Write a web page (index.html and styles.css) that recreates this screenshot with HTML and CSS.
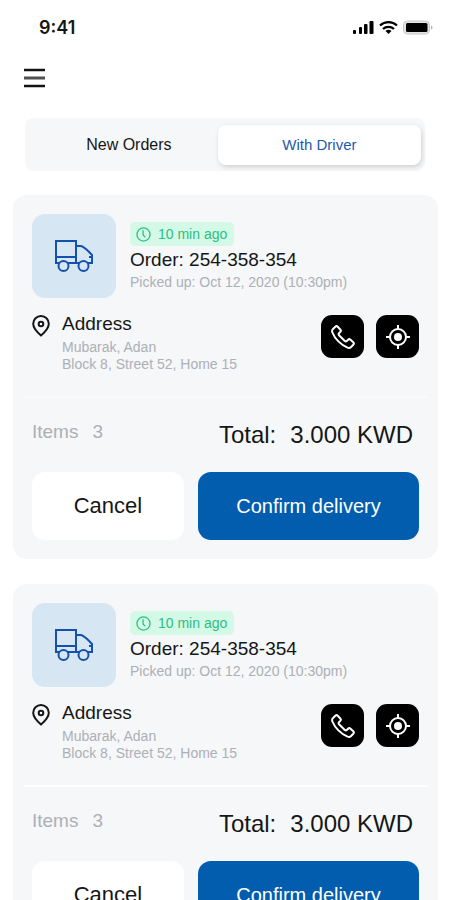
FILE: index.html
```html
<!DOCTYPE html>
<html lang="en">
<head>
<meta charset="utf-8">
<meta name="viewport" content="width=device-width, initial-scale=1">
<title>Orders</title>
<link rel="stylesheet" href="styles.css">
</head>
<body>
<svg class="sprite" aria-hidden="true">
  <symbol id="truck" viewBox="0 0 40 34">
    <g fill="none" stroke="currentColor" stroke-width="2">
      <path d="M5 24H2V2h20v22h-8M22 7h5c4 1 7 5 11 9v8h-4M2 18h20M22 24h3M38 18h-3"/>
      <circle cx="9.500" cy="27" r="5"/>
      <circle cx="29.500" cy="27" r="5"/>
    </g>
  </symbol>
  <symbol id="clock" viewBox="0 0 16 16">
    <g fill="none" stroke="currentColor" stroke-width="1.400" stroke-linecap="round">
      <circle cx="8" cy="8" r="7"/>
      <path d="M7.500 4v4.500l2 2"/>
    </g>
  </symbol>
  <symbol id="pin" viewBox="0 0 18 22">
    <g fill="none" stroke="currentColor" stroke-width="2">
      <path d="M9 20.500C5.500 17.500 1.200 13.500 1.200 8.800a7.800 7.800 0 0 1 15.600 0C16.800 13.500 12.500 17.500 9 20.500z"/>
      <circle cx="9" cy="9" r="2.300"/>
    </g>
  </symbol>
  <symbol id="phone" viewBox="0 0 24 24">
    <path fill="none" stroke="currentColor" stroke-width="2" stroke-linejoin="round" d="M1.800 4.200L4.300 1.700c.8-.7 1.700-.7 2.400 0l2.600 2.800c.7.800.7 1.700 0 2.400L8 8.200c-.6.700-.5 1.300 0 2l5.800 5.800c.7.500 1.300.6 2 0l1.300-1.300c.7-.7 1.600-.7 2.400 0l2.800 2.600c.7.700.7 1.600 0 2.400l-2.500 2.500c-.9.800-2 .9-3.300.4-3.500-1.400-6.400-3.500-9.100-6.200C4.900 13.900 2.800 11 1.400 7.500.9 6.200 1 5.100 1.800 4.200z"/>
  </symbol>
  <symbol id="locate" viewBox="0 0 24 24">
    <g fill="none" stroke="currentColor" stroke-width="2">
      <circle cx="12" cy="12" r="8"/>
      <path d="M12 0v4M12 20v4M0 12h4M20 12h4"/>
    </g>
    <circle cx="12" cy="12" r="4" fill="currentColor"/>
  </symbol>
</svg>

<header>
  <div class="status">
    <time>9:41</time>
    <svg class="status-icons" viewBox="0 0 82 16" aria-hidden="true">
      <g>
        <rect x="1" y="10" width="3" height="4" rx="1"/>
        <rect x="7" y="7" width="3" height="7" rx="1"/>
        <rect x="12" y="4" width="3.500" height="10" rx="1"/>
        <rect x="17.500" y="1" width="4" height="13" rx="1"/>
      </g>
      <g fill="none" stroke="#000" stroke-width="2.200">
        <path d="M28 5.500a12.500 12.500 0 0 1 17 0"/>
        <path d="M31 9a8 8 0 0 1 11 0"/>
      </g>
      <path d="M33.500 11a4.500 4.500 0 0 1 6 0l-3 3z"/>
      <rect x="51.500" y="1" width="26" height="13" rx="4" fill="#e4e4e4" stroke="#c8c8c8"/>
      <rect x="54" y="3" width="21.500" height="9" rx="1.500"/>
      <path d="M79 5.500c2 .6 2 3.600 0 4.200z" fill="#b5b5b5"/>
    </svg>
  </div>
  <button class="menu" type="button" aria-label="Menu">
    <svg viewBox="0 0 21 20" aria-hidden="true">
      <path d="M0 2h21M0 18h21" stroke="#141414" stroke-width="2.400"/>
      <path d="M0 10h21" stroke="#505050" stroke-width="3"/>
    </svg>
  </button>
</header>

<nav class="tabs">
  <button class="tab" type="button">New Orders</button>
  <button class="tab active" type="button" aria-current="true">With Driver</button>
</nav>

<main class="orders">
  <article class="card">
    <div class="summary">
      <div class="tile"><svg aria-hidden="true"><use href="#truck"/></svg></div>
      <div class="info">
        <span class="badge"><svg aria-hidden="true"><use href="#clock"/></svg>10 min ago</span>
        <h2>Order: 254-358-354</h2>
        <p>Picked up: Oct 12, 2020 (10:30pm)</p>
      </div>
    </div>
    <div class="address">
      <svg class="pin" aria-hidden="true"><use href="#pin"/></svg>
      <div class="place">
        <h3>Address</h3>
        <p>Mubarak, Adan<br>Block 8, Street 52, Home 15</p>
      </div>
      <button class="action" type="button" aria-label="Call"><svg aria-hidden="true"><use href="#phone"/></svg></button>
      <button class="action" type="button" aria-label="Locate"><svg aria-hidden="true"><use href="#locate"/></svg></button>
    </div>
    <hr class="soft">
    <div class="totals">
      <div class="items"><span>Items</span><span>3</span></div>
      <div class="total"><span>Total:</span><span>3.000 KWD</span></div>
    </div>
    <div class="buttons">
      <button class="cancel" type="button">Cancel</button>
      <button class="confirm" type="button">Confirm delivery</button>
    </div>
  </article>

  <article class="card">
    <div class="summary">
      <div class="tile"><svg aria-hidden="true"><use href="#truck"/></svg></div>
      <div class="info">
        <span class="badge"><svg aria-hidden="true"><use href="#clock"/></svg>10 min ago</span>
        <h2>Order: 254-358-354</h2>
        <p>Picked up: Oct 12, 2020 (10:30pm)</p>
      </div>
    </div>
    <div class="address">
      <svg class="pin" aria-hidden="true"><use href="#pin"/></svg>
      <div class="place">
        <h3>Address</h3>
        <p>Mubarak, Adan<br>Block 8, Street 52, Home 15</p>
      </div>
      <button class="action" type="button" aria-label="Call"><svg aria-hidden="true"><use href="#phone"/></svg></button>
      <button class="action" type="button" aria-label="Locate"><svg aria-hidden="true"><use href="#locate"/></svg></button>
    </div>
    <hr>
    <div class="totals">
      <div class="items"><span>Items</span><span>3</span></div>
      <div class="total"><span>Total:</span><span>3.000 KWD</span></div>
    </div>
    <div class="buttons">
      <button class="cancel" type="button">Cancel</button>
      <button class="confirm" type="button">Confirm delivery</button>
    </div>
  </article>
</main>
</body>
</html>
```

FILE: styles.css
```css
* {
  box-sizing: border-box;
}

body {
  margin: 0;
  background: #fff;
  color: #161616;
  font-family: "Liberation Sans", Arial, sans-serif;
}

html {
  scrollbar-width: none;
}

h2, h3, p {
  margin: 0;
  font-weight: 400;
}

button {
  margin: 0;
  padding: 0;
  border: 0;
  background: none;
  color: inherit;
  font-family: inherit;
  cursor: pointer;
}

svg {
  display: block;
}

.sprite {
  position: absolute;
  width: 0;
  height: 0;
}

.status {
  display: flex;
  justify-content: space-between;
  align-items: center;
  padding: 16px 16px 0 39px;
}

.status time {
  font: 600 18px/24px Inter, sans-serif;
}

.status-icons {
  width: 82px;
  height: 16px;
}

.menu {
  display: block;
  margin: 28px 24px 0;
}

.menu svg {
  width: 21px;
  height: 20px;
}

.tabs {
  display: grid;
  grid-template-columns: 7fr 8fr;
  margin: 30px 25px 0;
  padding: 7px 4px 6px 15px;
  border-radius: 8px;
  background: #f5f7f8;
}

.tab {
  height: 40px;
  border-radius: 8px;
  font-size: 16px;
  line-height: 18px;
}

.tab.active {
  background: #fff;
  color: #1f58ad;
  font-size: 15px;
  box-shadow: 1px 2px 5px rgba(0, 0, 0, 0.16);
}

.orders {
  display: grid;
  gap: 25px;
  padding: 24px 12px 25px 13px;
}

.card {
  padding: 19px;
  border-radius: 14px;
  background: #f5f7f9;
}

.summary {
  display: flex;
  gap: 14px;
}

.tile {
  display: grid;
  place-items: center;
  width: 84px;
  height: 84px;
  border-radius: 13px;
  background: #d6e6f3;
  color: #1450ad;
}

.tile svg {
  width: 40px;
  height: 34px;
}

.info {
  padding-top: 8px;
}

.badge {
  display: inline-flex;
  align-items: center;
  gap: 7px;
  height: 24px;
  padding: 0 7px 0 6px;
  border-radius: 5px;
  background: #d5f9e7;
  color: #2cbf82;
  font-size: 14px;
  vertical-align: top;
}

.badge svg {
  width: 15px;
  height: 15px;
}

h2, h3 {
  font-size: 19px;
}

h2 {
  line-height: 28px;
}

h3 {
  line-height: 22px;
}

p {
  color: #adb0b5;
  font-size: 14px;
  line-height: 17px;
}

.address {
  display: flex;
  align-items: flex-start;
  margin-top: 17px;
}

.pin {
  width: 18px;
  height: 22px;
}

.place {
  flex: 1;
  margin-left: 12px;
}

.place h3 {
  margin-top: -2px;
  margin-bottom: 4px;
}

.action {
  display: grid;
  place-items: center;
  width: 43px;
  height: 43px;
  border-radius: 11px;
  background: #000;
  color: #fff;
}

.action + .action {
  margin-left: 12px;
}

.action svg {
  width: 24px;
  height: 24px;
}

hr {
  height: 2px;
  margin: 23px -9px 0 -8px;
  border: 0;
  background: #fff;
}

hr.soft {
  background: #f9fafb;
}

.totals {
  display: flex;
  justify-content: space-between;
  margin-top: 23px;
  padding-right: 6px;
}

.items,
.total {
  display: flex;
  gap: 14px;
}

.items {
  color: #adb0b5;
  font-size: 19px;
  line-height: 22px;
}

.total {
  font-size: 24px;
  line-height: 28px;
}

.buttons {
  display: grid;
  grid-template-columns: 11fr 16fr;
  gap: 14px;
  margin-top: 23px;
}

.cancel,
.confirm {
  height: 68px;
  border-radius: 13px;
}

.cancel {
  background: #fff;
  font-size: 22px;
}

.confirm {
  background: #035dae;
  color: #fff;
  font-size: 20px;
}
```
